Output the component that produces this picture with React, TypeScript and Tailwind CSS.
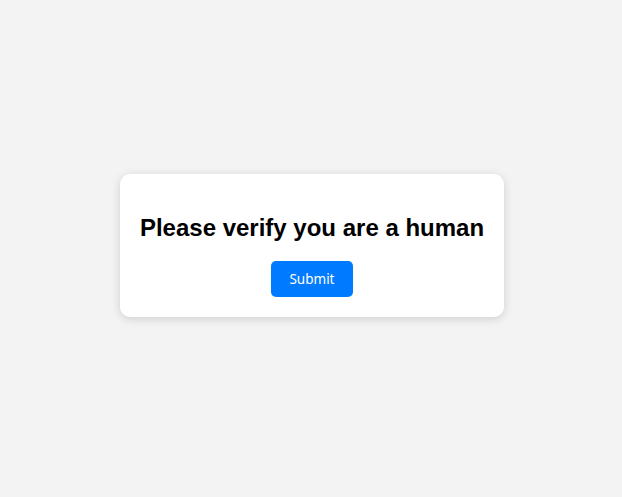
export default function App() {
  return (
    <div className="flex min-h-screen items-center justify-center bg-[#f3f3f3] pb-[6px] pl-[2px]">
      <div className="flex flex-col items-center rounded-[10px] bg-white p-5 shadow-[0_2px_10px_rgba(0,0,0,0.15)]">
        <h2 className="my-5 whitespace-nowrap font-['Liberation_Sans',Arial,sans-serif] text-[24px] leading-[27px] font-bold text-black">
          Please verify you are a human
        </h2>
        <button
          type="button"
          className="h-9 w-[82px] rounded-[5px] bg-[#007bff] font-['Noto_Sans',sans-serif] text-[13.5px] text-white"
        >
          Submit
        </button>
      </div>
    </div>
  );
}
